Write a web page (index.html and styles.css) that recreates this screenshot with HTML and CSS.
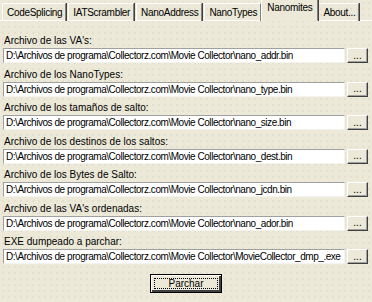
FILE: index.html
```html
<!DOCTYPE html>
<html lang="es">

<head>
    <meta charset="UTF-8">
    <title>Nanomites</title>
    <link rel="stylesheet" href="styles.css">
</head>

<body>
    <div class="tabs">
        <div class="tab">CodeSplicing</div>
        <div class="tab">IATScrambler</div>
        <div class="tab">NanoAddress</div>
        <div class="tab">NanoTypes</div>
        <div class="tab active">Nanomites</div>
        <div class="tab">About...</div>
    </div>
    <div class="panel">
        <div class="field">
            <label>Archivo de las VA's:</label>
            <div class="row">
                <input type="text" value="D:\Archivos de programa\Collectorz.com\Movie Collector\nano_addr.bin">
                <button class="browse">...</button>
            </div>
        </div>
        <div class="field">
            <label>Archivo de los NanoTypes:</label>
            <div class="row">
                <input type="text" value="D:\Archivos de programa\Collectorz.com\Movie Collector\nano_type.bin">
                <button class="browse">...</button>
            </div>
        </div>
        <div class="field">
            <label>Archivo de los tamaños de salto:</label>
            <div class="row">
                <input type="text" value="D:\Archivos de programa\Collectorz.com\Movie Collector\nano_size.bin">
                <button class="browse">...</button>
            </div>
        </div>
        <div class="field">
            <label>Archivo de los destinos de los saltos:</label>
            <div class="row">
                <input type="text" value="D:\Archivos de programa\Collectorz.com\Movie Collector\nano_dest.bin">
                <button class="browse">...</button>
            </div>
        </div>
        <div class="field">
            <label>Archivo de los Bytes de Salto:</label>
            <div class="row">
                <input type="text" value="D:\Archivos de programa\Collectorz.com\Movie Collector\nano_jcdn.bin">
                <button class="browse">...</button>
            </div>
        </div>
        <div class="field">
            <label>Archivo de las VA's ordenadas:</label>
            <div class="row">
                <input type="text" value="D:\Archivos de programa\Collectorz.com\Movie Collector\nano_ador.bin">
                <button class="browse">...</button>
            </div>
        </div>
        <div class="field">
            <label>EXE dumpeado a parchar:</label>
            <div class="row">
                <input type="text" value="D:\Archivos de programa\Collectorz.com\Movie Collector\MovieCollector_dmp_.exe">
                <button class="browse">...</button>
            </div>
        </div>
        <div class="actions">
            <button class="main">Parchar</button>
        </div>
    </div>
</body>

</html>
```

FILE: styles.css
```css
body {
    margin: 0;
    font-family: "Liberation Sans", Arial, sans-serif;
    font-size: 10px;
    color: #000;
    background-color: #ece9d8;
    background-image: radial-gradient(circle, #d8d5c6 0.6px, transparent 0.8px);
    background-size: 6px 6px;
    height: 302px;
    overflow: hidden;
}

.tabs {
    display: flex;
    align-items: flex-end;
    height: 20px;
    padding-left: 2px;
    border-bottom: 1px solid #fff;
}

.tab {
    height: 17px;
    line-height: 17px;
    padding: 0 3px 0 4px;
    border-left: 1px solid #fff;
    border-top: 1px solid #fff;
    border-right: 1px solid #808080;
    margin-bottom: -1px;
    box-shadow: 1px 0 0 #404040;
    margin-right: 2px;
    letter-spacing: -0.3px;
}

.tab.active {
    height: 20px;
    line-height: 16px;
    padding: 0 5px;
    border-bottom: 1px solid #ece9d8;
    background-color: #ece9d8;
    margin-left: -2px;
    margin-right: 0;
    position: relative;
}

.panel {
    padding: 13px 3px 0 3px;
}

.field {
    margin-bottom: 4.5px;
}

label {
    display: block;
    height: 13px;
    line-height: 13px;
    margin-bottom: 1px;
    padding-left: 1px;
}

.row {
    display: flex;
    align-items: center;
    gap: 2px;
}

input {
    flex: 1;
    min-width: 0;
    height: 13px;
    padding: 0 1px 0 2px;
    border: 1px solid #f4f3ee;
    border-top-color: #a0a0a0;
    border-left-color: #a0a0a0;
    background: #fff;
    font-family: inherit;
    font-size: 10px;
    letter-spacing: -0.45px;
    outline: none;
}

.browse,
.main {
    font-family: inherit;
    font-size: 10px;
    background: #ece9d8;
    border: 1px solid #fff;
    border-right-color: #404040;
    border-bottom-color: #404040;
    box-shadow: inset -1px -1px 0 #a0a0a0;
    padding: 0;
}

.browse {
    width: 21px;
    height: 15px;
    line-height: 10px;
    margin-right: 1px;
}

.actions {
    display: flex;
    justify-content: center;
    padding-top: 5px;
}

.main {
    width: 72px;
    height: 19px;
    border: 1px solid #000;
    box-shadow: inset 1px 1px 0 #fff, inset -2px -2px 0 #404040;
    outline: 1px dotted #000;
    outline-offset: -5px;
}
```
